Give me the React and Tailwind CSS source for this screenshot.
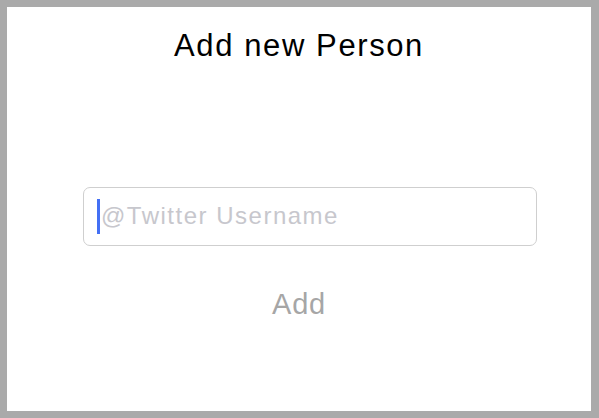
import React from 'react'

const App = () => {
  return (
    <div className="w-[599px] h-[418px] bg-[#aaaaaa] pt-[7px] pl-[7px] pr-[8px] pb-[7px] font-['Liberation_Sans',Arial,sans-serif]">
      <div className="h-full w-full bg-white flex flex-col">
        {/* titre */}
        <h1 className="mt-[23px] text-center text-[31px] leading-none tracking-[1.6px] text-black">
          Add new Person
        </h1>

        <div className="mt-[126px] ml-[76px] w-[454px] h-[59px] rounded-[7px] border border-[#cfcfcf] flex items-center pl-[13px]">
          <span className="w-[3px] h-[35px] bg-[#4470f4]"></span>
          <span className="ml-[1px] -mt-[2px] text-[24px] leading-none tracking-[1.5px] text-[#c7c7cd]">
            @Twitter Username
          </span>
        </div>

        <button className="mt-[44px] self-center text-[29px] leading-none tracking-[0.8px] text-[#a6a6a6]">
          Add
        </button>
      </div>
    </div>
  )
}

export default App
